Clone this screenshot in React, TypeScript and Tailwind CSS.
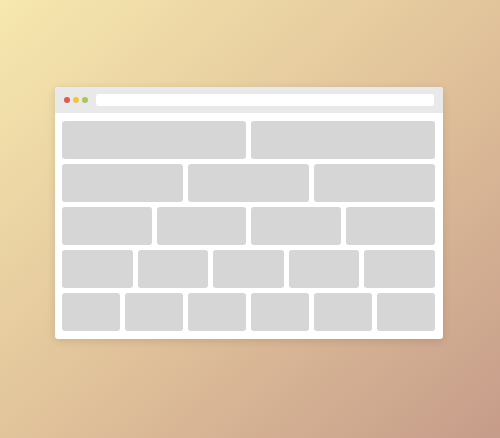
const rows = [2, 3, 4, 5, 6];

export default function App() {
  return (
    <div className="flex h-[438px] w-full items-center justify-center bg-gradient-to-br from-[#f6e8ae] via-[#e2c49b] to-[#c69c8a] pb-[12px] pr-[2px]">
      {/* Browser window */}
      <div className="flex h-[252px] w-[388px] flex-col overflow-hidden rounded-[3px] bg-white shadow-[0_2px_8px_rgba(0,0,0,0.12)]">
        {/* Title bar */}
        <div className="flex h-[26px] shrink-0 items-center bg-[#e9e9e9] pl-[9px] pr-[9px]">
          <div className="flex items-center gap-[3px]">
            <span className="h-[6px] w-[6px] rounded-full bg-[#da5b55]" />
            <span className="h-[6px] w-[6px] rounded-full bg-[#f4c23e]" />
            <span className="h-[6px] w-[6px] rounded-full bg-[#a9c65f]" />
          </div>
          <div className="ml-[8px] h-[12px] flex-1 rounded-[3px] bg-white" />
        </div>

        {/* Block grid */}
        <div className="flex flex-1 flex-col gap-[5px] pb-[8px] pl-[7px] pr-[8px] pt-[8px]">
          {rows.map((count, r) => (
            <div key={r} className="flex flex-1 gap-[5px]">
              {Array.from({ length: count }).map((_, i) => (
                <div key={i} className="flex-1 rounded-[3px] bg-[#d6d6d6]" />
              ))}
            </div>
          ))}
        </div>
      </div>
    </div>
  );
}
